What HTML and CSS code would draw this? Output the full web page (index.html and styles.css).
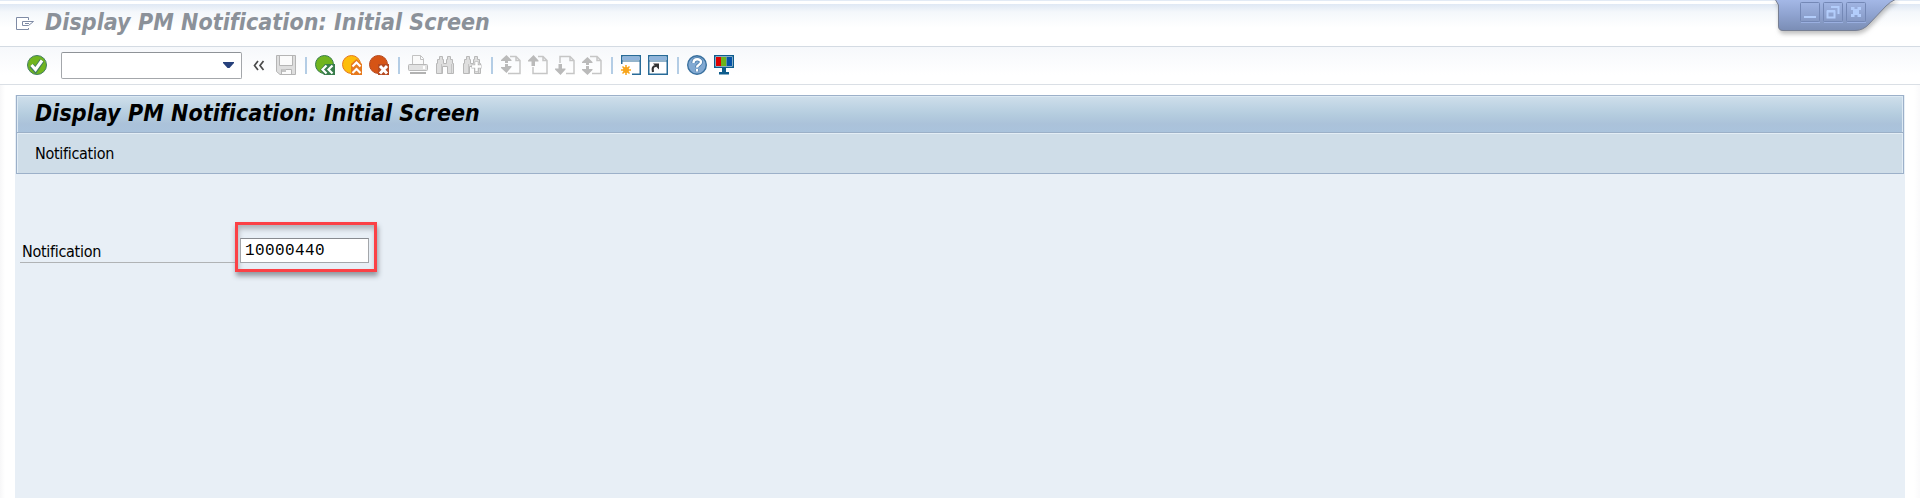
FILE: index.html
```html
<!DOCTYPE html>
<html lang="en">
<head>
<meta charset="utf-8">
<title>Display PM Notification: Initial Screen</title>
<link rel="stylesheet" href="styles.css">
</head>
<body>
<svg class="defs" width="0" height="0">
  <defs>
    <symbol id="glasses" viewBox="0 0 20 20"><path d="M4.500 1.500h3v3h1v4h3v-4h1v-3h3v3h2v4h1v10h-6v-7h-5v7h-6v-10h1v-4h2z" fill="#dedede" stroke="#b8b8b8"/><path d="M6.500 9v9M16.500 9v9" stroke="#c4c4c4"/></symbol>
  </defs>
</svg>
<div class="window">
  <header class="titlebar">
    <svg class="menu-icon" width="18" height="14" viewBox="0 0 18 14"><path d="M12.500 3V.5H.5v12h12V11" fill="#fff" stroke="#7f8ba5"/><path d="M6.500 4.500h11l-5 4h-6z" fill="#fff" stroke="#7f8ba5"/><path d="M9 6.500h4" stroke="#7f8ba5"/></svg>
    <span class="title">Display PM Notification: Initial Screen</span>
  </header>

  <nav class="toolbar">
    <svg class="icon" viewBox="0 0 20 20"><circle cx="10" cy="10" r="9.500" fill="#70b51f" stroke="#437d62"/><path d="M4.500 10.500l4 4.500 6.500-9.500" fill="none" stroke="#437d62" stroke-width="5"/><path d="M4.500 10l4 4.500 6.500-9" fill="none" stroke="#fff" stroke-width="3"/></svg>
    <div class="combo"><svg width="11" height="6" viewBox="0 0 11 6"><path d="M0 0h11v1L6.500 6h-2L0 1z" fill="#26407b"/></svg></div>
    <svg class="collapse" width="12" height="11" viewBox="0 0 12 11"><path d="M5 1L1.500 5.500 5 10M10.500 1L7 5.500l3.500 4.500" fill="none" stroke="#4a4a4a" stroke-width="1.700"/></svg>
    <svg class="icon" viewBox="0 0 20 20"><path d="M.5.5h19v19H4l-3.500-3z" fill="#dedede" stroke="#b5b5b5"/><path d="M3.500 1v9.500h13V1M5.500 19v-4.500h10V19" fill="#fbfbfb" stroke="#b5b5b5"/><path d="M6 14h4v3H6z" fill="#c5c5c5"/></svg>
    <i class="sep"></i>
    <svg class="icon" viewBox="0 0 20 20"><circle cx="9.500" cy="9.500" r="9" fill="#70b51f" stroke="#387d4b"/><path d="M5 15l5-6h10v11H9z" fill="#387d4b"/><path d="M11.500 10.500L7.500 14.500l4 4M17.500 10.500l-4 4 4 4" fill="none" stroke="#fff" stroke-width="2.200"/></svg>
    <svg class="icon" viewBox="0 0 20 20"><circle cx="9.500" cy="9.500" r="9" fill="#fdbd0b" stroke="#e6791d"/><path d="M9 9l5.500-5L20 9v11H9z" fill="#e6791d"/><path d="M10.500 11.500l4-4 4 4M10.500 18l4-4 4 4" fill="none" stroke="#fff" stroke-width="2.200"/></svg>
    <svg class="icon" viewBox="0 0 20 20"><circle cx="9.500" cy="9.500" r="9" fill="#d65415" stroke="#b64a20"/><path d="M9 9h11v11H9z" fill="#b64a20"/><path d="M11 11l7 7.500M18 11l-7 7.500" stroke="#fff" stroke-width="3"/></svg>
    <i class="sep"></i>
    <svg class="icon" viewBox="0 0 20 20"><path d="M4.500 9V.5h8l3 3V9M12.500.5v4h3" fill="#fafafa" stroke="#c2c2c2"/><rect x=".5" y="9.500" width="19" height="6" rx="1" fill="#e2e2e2" stroke="#b8b8b8"/><path d="M15 11h2v3h-2z" fill="#fff"/><path d="M2 17h16v2H2z" fill="#b2b2b2"/></svg>
    <svg class="icon"><use href="#glasses"/></svg>
    <svg class="icon" viewBox="0 0 20 20"><use href="#glasses"/><path d="M12.500 6.500h4v3h3v4h-3v3h-4v-3h-3v-4h3z" fill="#b8b8b8"/><path d="M14.500 7v9M10 11.500h9" stroke="#fff" stroke-width="2.500"/></svg>
    <i class="sep"></i>
    <svg class="icon gray" viewBox="0 0 20 20"><path d="M9 1.500H15L19 5.500V18.500H7M15 1.500V5.500H19"/><path class="arrow" d="M5.500 0L10.500 5V6H7V8H4V6H0V5zM4 9h3v2h3.500v1l-5 6-5.500-5v-1h4z"/></svg>
    <svg class="icon gray" viewBox="0 0 20 20"><path d="M10 1.500H15L19 5.500V18.500H5V12M15 1.500V5.500H19"/><path class="arrow" d="M5.500 0L10.500 5.500V6.500H7V11H3.500V6.500H0V5.500z"/></svg>
    <svg class="icon gray" viewBox="0 0 20 20"><path d="M5 8V1.500H15L19 5.500V18.500H11M15 1.500V5.500H19"/><path class="arrow" d="M3.500 9H7v4.500h3.500v1L5.500 20 0 14.500v-1h3.500z"/></svg>
    <svg class="icon gray" viewBox="0 0 20 20"><path d="M8 1.500H15L19 5.500V18.500H10M15 1.500V5.500H19"/><path class="arrow" d="M5.500 2L10.500 7V8H7V10H4V8H0V7zM4 11h3v3h3.500v1l-5 5-5.500-5v-1h4z"/></svg>
    <i class="sep"></i>
    <svg class="icon" viewBox="0 0 20 20"><rect x=".75" y=".75" width="18.500" height="18.500" fill="#fff" stroke="#286b98" stroke-width="1.500"/><path d="M1.500 1.500h17V5h-17z" fill="#8fb4dc"/><path d="M0 6h19" stroke="#286b98"/><path d="M0 9h11v11H0z" fill="#fff"/><path d="M5 10v10M0 15h10M1.500 11.500l7 7M8.500 11.500l-7 7" stroke="#f7a51c" stroke-width="1.500"/><circle cx="5" cy="15" r="3" fill="#f7a51c"/></svg>
    <svg class="icon" viewBox="0 0 20 20"><rect x=".75" y=".75" width="18.500" height="18.500" fill="#fff" stroke="#286b98" stroke-width="1.500"/><path d="M1.500 1.500h17V5h-17z" fill="#8fb4dc"/><path d="M0 6h19" stroke="#286b98"/><path d="M5 17c-1-4 0-6 3-6" fill="none" stroke="#333" stroke-width="2.200"/><path d="M5 8.500h6v6z" fill="#333"/></svg>
    <i class="sep"></i>
    <svg class="icon" viewBox="0 0 20 20"><circle cx="10" cy="10" r="9.300" fill="#82a9d2" stroke="#39709e" stroke-width="1.400"/><path d="M6.500 8c0-5 7.500-4.500 7.500-1 0 3-4 2.500-4 5.500M10 14v2.500" fill="none" stroke="#4a7cab" stroke-width="4"/><path d="M6.500 8c0-5 7.500-4.500 7.500-1 0 3-4 2.500-4 5.500M10 14v2.500" fill="none" stroke="#fff" stroke-width="2.400"/></svg>
    <svg class="icon" viewBox="0 0 20 20"><path d="M0 0h20v13H0z" fill="#0e5c8c"/><path d="M1.500 1.500h17v10h-17z" fill="#fff"/><path d="M2 2h5v9H2z" fill="#d00"/><path d="M7 2h5.500v9H7z" fill="#6db31c"/><path d="M12.500 2H18v9h-5.500z" fill="#0753a7"/><path d="M8 13h4v4h3v2.500H5V17h3z" fill="#0e5c8c"/></svg>
  </nav>

  <main class="body">
    <section class="head">
      <h1 class="title">Display PM Notification: Initial Screen</h1>
      <div class="actions">Notification</div>
    </section>
    <div class="field">
      <label class="label" for="notification">Notification</label>
      <div class="highlight"><input class="value" id="notification" value="10000440"></div>
    </div>
  </main>
</div>

<svg class="corner" width="128" height="38" viewBox="0 0 128 38">
  <defs><linearGradient id="cap" x1="0" y1="0" x2="0" y2="1"><stop offset="0" stop-color="#a5b9e8"/><stop offset=".5" stop-color="#8fa3d0"/><stop offset="1" stop-color="#7a8db5"/></linearGradient></defs>
  <path class="tab" d="M3 -1L6.500 5V26Q6.500 30.500 11 30.500H83Q91 30.500 97 24L114 6Q118 2 124 -1z" fill="url(#cap)" stroke="#777f93"/>
  <g fill="none" stroke="#7488b6"><rect x="28.500" y="2.500" width="19" height="19" rx="1"/><rect x="51.500" y="2.500" width="19" height="19" rx="1"/><rect x="74.500" y="2.500" width="19" height="19" rx="1"/></g>
  <path d="M29 22.500h19M52 22.500h19M75 22.500h19" stroke="#9aafe0"/>
  <path d="M32 17h12M55.500 11.500h7v6h-7zM55 11h8M59 7h7.500v7" fill="none" stroke="#b3cdfb" stroke-width="2"/>
  <path d="M79 7h3.500v2h3V7H89v3h-2v4h2v3h-3.500v-2h-3v2H79v-3h2v-4h-2z" fill="#b3cdfb"/>
</svg>
</body>
</html>
```
FILE: styles.css
```css
* { box-sizing: border-box; }
body {
  margin: 0;
  height: 498px;
  overflow: hidden;
  position: relative;
  font-family: "DejaVu Sans Condensed", "DejaVu Sans", sans-serif;
  font-stretch: condensed;
  color: #000;
}
svg { display: block; flex: none; }
.defs { position: absolute; }
.window {
  height: 498px;
  display: flex;
  flex-direction: column;
  background: linear-gradient(90deg, #f7f7f8, #fff 5px, #fff 1914px, #fafafb);
}
.titlebar {
  height: 47px;
  display: flex;
  align-items: center;
  gap: 11px;
  padding: 0 0 2px 16px;
  border-bottom: 1px solid #d4dbe3;
  background: linear-gradient(#e2eaf5 0 1px, #fff 1px 4px, #dfe8f4 4px, #f4f7fb 12px, #fff 28px);
}
.menu-icon { margin-top: 3px; }
.title {
  margin: 0;
  font-size: 23px;
  line-height: 28px;
  font-weight: bold;
  font-style: italic;
  white-space: nowrap;
  letter-spacing: 0.06px;
}
.titlebar .title { color: #8b9199; }
.toolbar {
  height: 38px;
  display: flex;
  align-items: center;
  gap: 7px;
  padding: 0 0 1px 27px;
  border-bottom: 1px solid #dadfe5;
  background: linear-gradient(#f6f8fb, #fff 28px);
}
.icon { width: 20px; height: 20px; }
.gray { fill: none; stroke: #c6c6c6; stroke-width: 1.5; }
.gray .arrow { fill: #bababa; stroke: none; }
.combo {
  width: 181px;
  height: 27px;
  margin: 0 4px 0 7px;
  padding-right: 7px;
  display: flex;
  align-items: center;
  justify-content: flex-end;
  background: #fff;
  border: 1px solid #a4a7ab;
  border-top-color: #8f9398;
  border-radius: 2px;
}
.collapse { margin-right: 4px; }
.sep {
  width: 2px;
  height: 17px;
  margin: 0 1px 0 2px;
  background: #b4cde5;
}
.body {
  flex: 1;
  margin: 10px 15px 0;
  padding: 0 1px;
  background: #e8eff6;
}
.head {
  height: 79px;
  border: 1px solid #9cb0c9;
  background: #cfdde8;
}
.head .title {
  height: 37px;
  padding: 3px 0 0 18px;
  background: linear-gradient(#cfdfeb, #b5cddf 18px, #abc2da 28px, #aac3dc);
  box-shadow: inset 1px 1px #dce9f3, inset -1px 0 #dce9f3;
  border-bottom: 1px solid #9cb0c7;
}
.actions {
  height: 40px;
  padding-left: 18px;
  font-size: 16px;
  line-height: 42px;
  letter-spacing: -.3px;
  box-shadow: inset 1px 1px #e3edf5, inset -1px 0 #e3edf5;
}
.field {
  display: flex;
  align-items: flex-start;
  margin: 48px 0 0 4px;
}
.label {
  width: 215px;
  height: 41px;
  padding: 20px 0 0 2px;
  font-size: 16px;
  line-height: 20px;
  letter-spacing: -.3px;
  border-bottom: 1px solid #b0b3b5;
}
.highlight {
  width: 142px;
  height: 50px;
  padding: 13px 5px 0 2px;
  border: 3px solid #fb4146;
  box-shadow: 1px 4px 5px #9298a0, inset 1px 4px 5px #b0b5bb;
}
.value {
  display: block;
  width: 129px;
  height: 25px;
  padding: 1px 0 0 4px;
  border: 1px solid #a3a6aa;
  border-top: 1px solid #888b90;
  background: #fff;
  font: 16px "Liberation Mono", monospace;
  letter-spacing: .4px;
  outline: none;
}
.corner { position: absolute; left: 1772px; top: 0; }
.tab { filter: drop-shadow(1px 3px 2px #8888); }
```
